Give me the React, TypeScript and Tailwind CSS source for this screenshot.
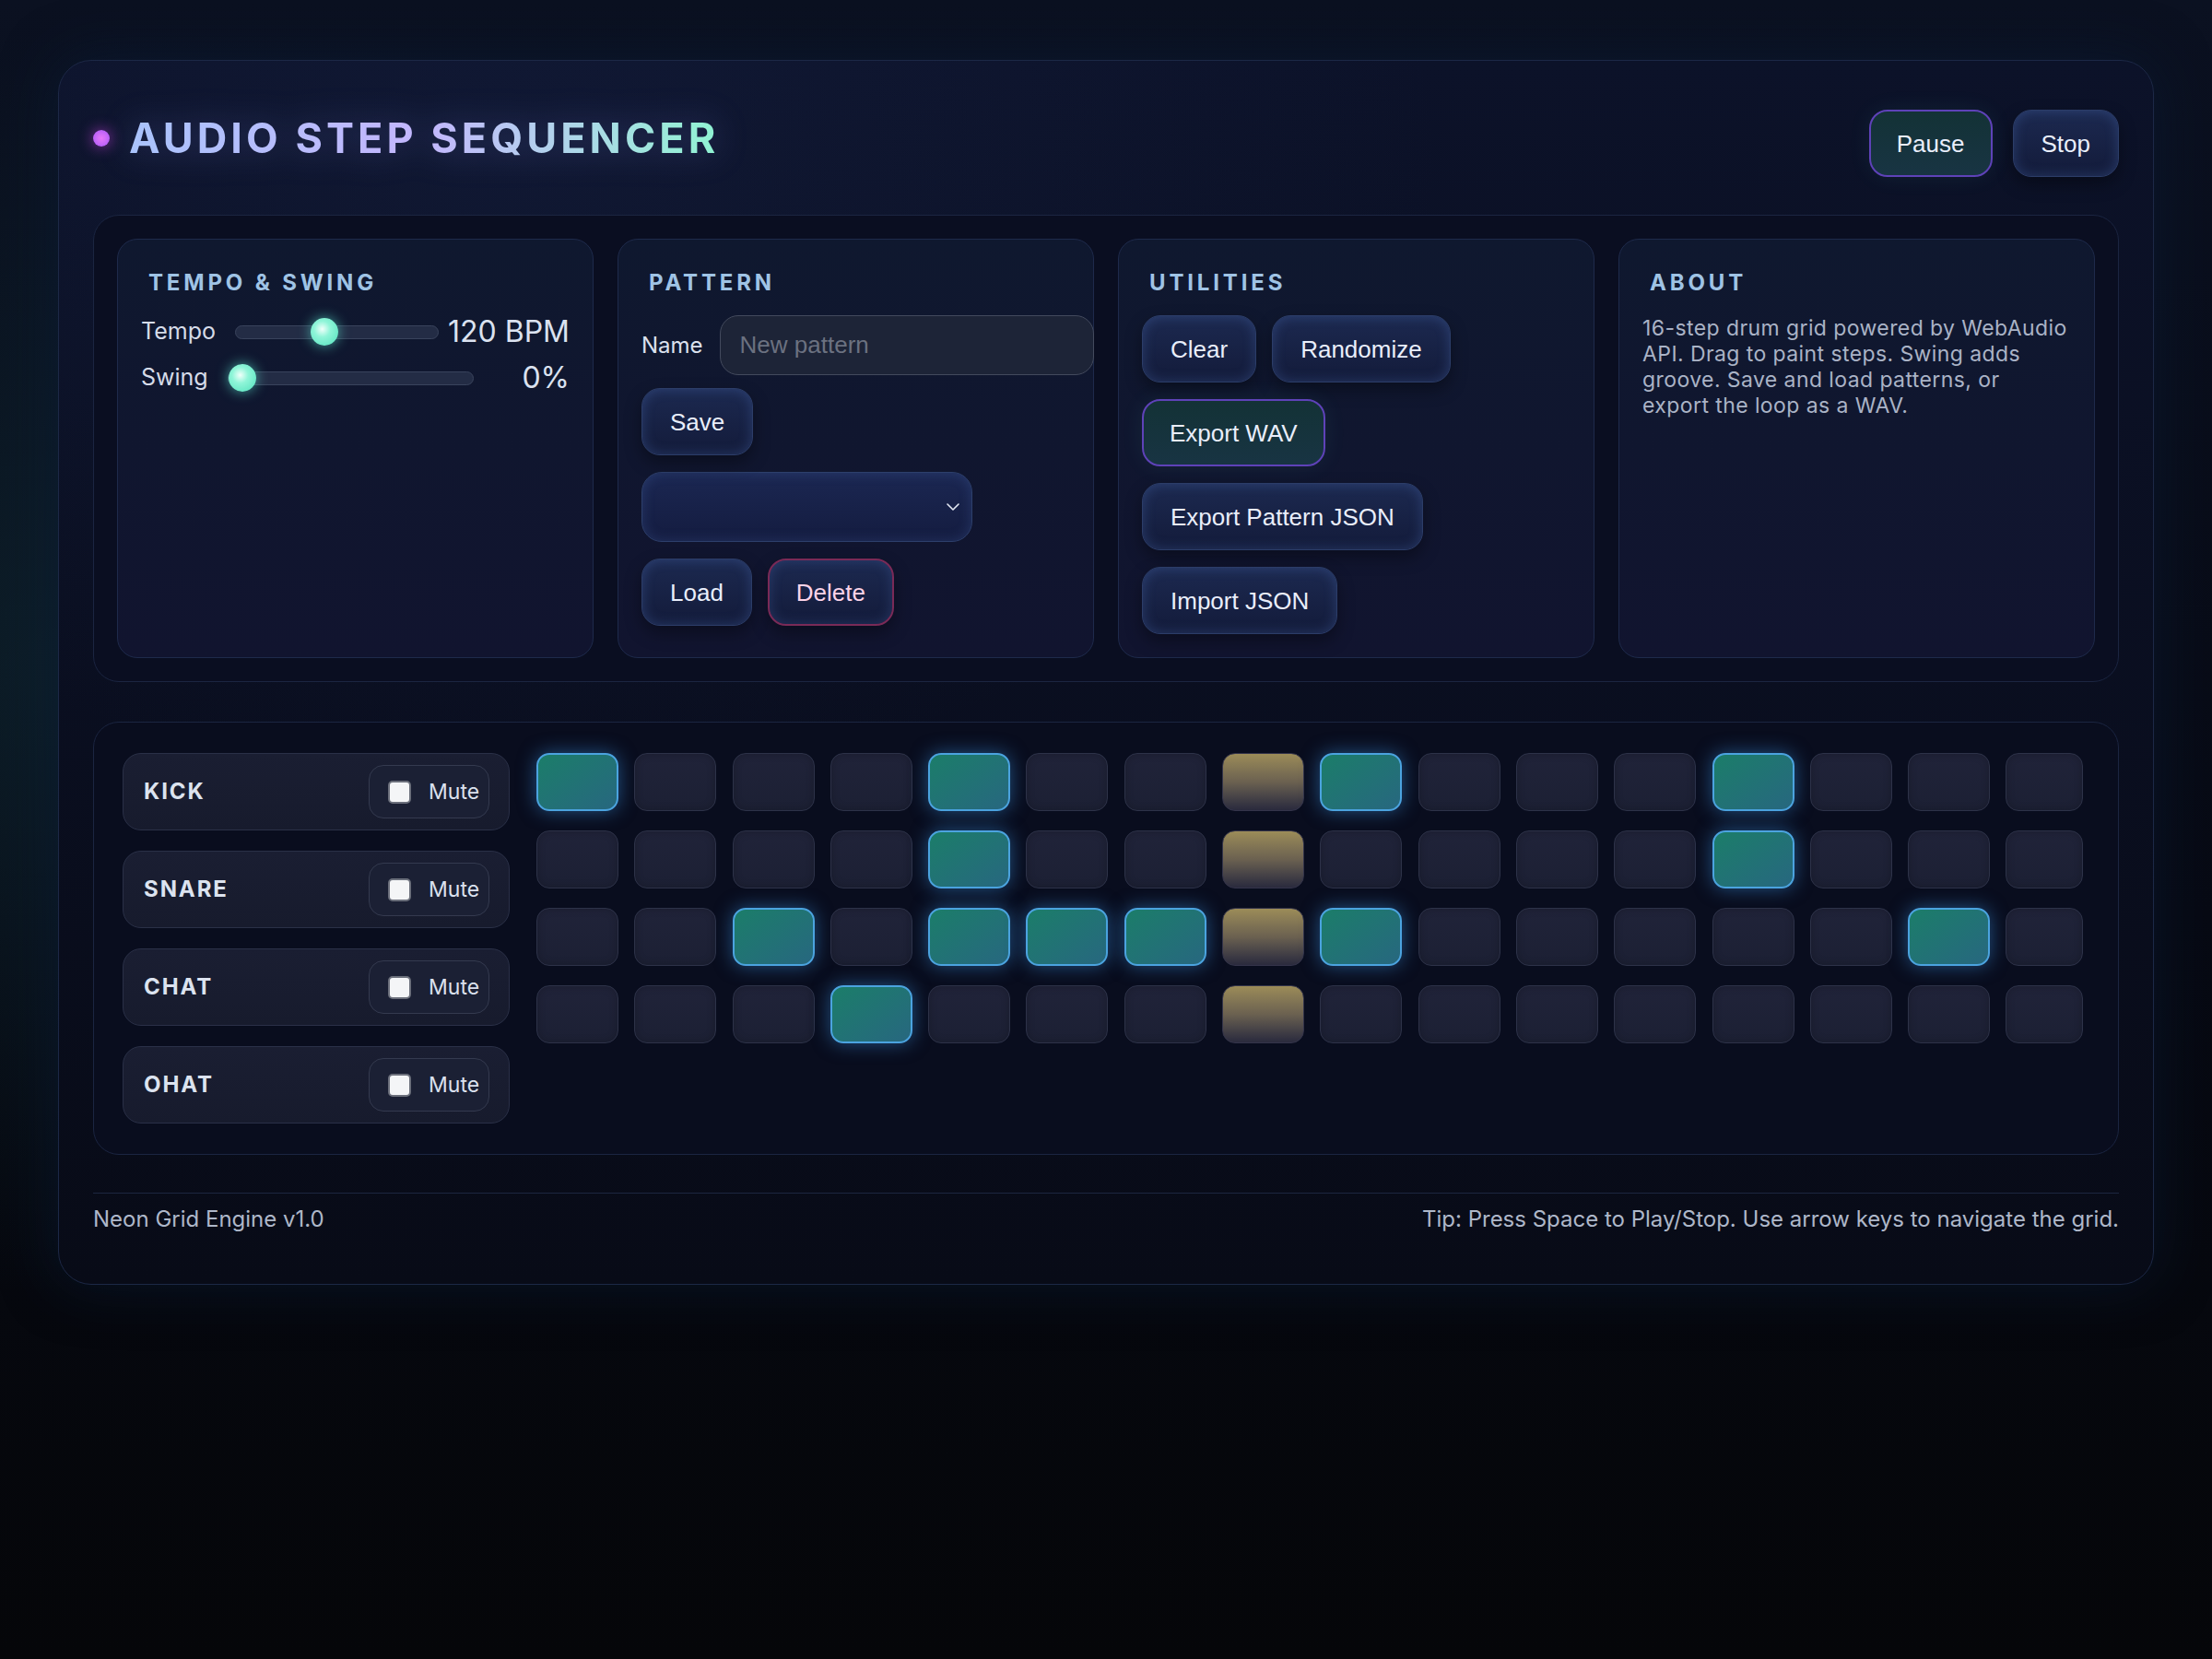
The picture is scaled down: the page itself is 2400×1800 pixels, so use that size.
import type { FC, ReactNode } from 'react'

const tracks = ['KICK', 'SNARE', 'CHAT', 'OHAT']
const steps: number[][] = [
  [0, 4, 8, 12],
  [4, 12],
  [2, 4, 5, 6, 8, 14],
  [3],
]
const playhead = 7

type Variant = 'default' | 'accent' | 'danger'

const variantClass: Record<Variant, string> = {
  default:
    'border border-[#2c3d68] bg-linear-to-b from-[#1c2950] to-[#131b3a] text-[#e9eefb] px-[30px] shadow-[inset_0_0_14px_rgba(90,130,210,0.3),0_8px_18px_rgba(0,0,0,0.35)]',
  accent:
    'border-2 border-[#5e42b8] bg-linear-to-b from-[#133236] to-[#183443] text-[#e9eefb] px-[28px] shadow-[0_0_26px_rgba(94,234,212,0.07)]',
  danger:
    'border-2 border-[#7a2a57] bg-linear-to-b from-[#1c2950] to-[#131b3a] text-[#fbd3e8] px-[29px] shadow-[inset_0_0_14px_rgba(90,130,210,0.25),0_8px_18px_rgba(0,0,0,0.35)]',
}

const Btn: FC<{ children: ReactNode; variant?: Variant }> = ({ children, variant = 'default' }) => (
  <button
    type="button"
    className={`h-[73px] shrink-0 rounded-[20px] font-['Liberation_Sans',Arial,sans-serif] text-[26px] leading-none ${variantClass[variant]}`}
  >
    {children}
  </button>
)

const Card: FC<{ title: string; children: ReactNode }> = ({ title, children }) => (
  <div className="rounded-[22px] border border-[#1e2a4b] bg-linear-to-b from-[#0f182f] to-[#11142f] px-[25px] pt-[32px] pb-[25px]">
    <h2 className="mb-[20px] pl-[8px] text-[24px] leading-[30px] font-bold tracking-[0.16em] text-[#9fc3e5]">
      {title}
    </h2>
    {children}
  </div>
)

const Slider: FC<{ pct: number }> = ({ pct }) => (
  <div className="relative h-[15px] flex-1 rounded-full border border-[#39435c] bg-[#232c45]">
    <span
      className="absolute top-1/2 h-[30px] w-[30px] -translate-x-1/2 -translate-y-1/2 rounded-full bg-[radial-gradient(circle_at_42%_40%,#f0fffa_0%,#8ff5d8_35%,#4fe0bb_100%)] shadow-[0_0_14px_rgba(94,234,212,0.65)]"
      style={{ left: `calc(15px + (100% - 30px) * ${pct})` }}
    />
  </div>
)

const Row: FC<{ label: string; value: string; pct: number }> = ({ label, value, pct }) => (
  <div className="flex h-[36px] items-center">
    <span className="mr-[21px] text-[25px] text-[#d5dbe8]">{label}</span>
    <Slider pct={pct} />
    <span className="ml-[10px] min-w-[94px] text-right text-[32px] leading-none text-[#dbe2f0]">{value}</span>
  </div>
)

const Cell: FC<{ on: boolean; head: boolean }> = ({ on, head }) => {
  if (head)
    return (
      <div className="h-[63px] rounded-[14px] border border-[#34344a] bg-linear-to-b from-[#9c8c58] via-[#6b6150] to-[#2a2a3d]" />
    )
  if (on)
    return (
      <div className="h-[63px] rounded-[14px] border-2 border-[#4ba3df] bg-linear-to-br from-[#1b7d69] to-[#27677f] shadow-[0_0_20px_rgba(59,150,230,0.5)]" />
    )
  return (
    <div className="h-[63px] rounded-[14px] border-[1.5px] border-[#2d3248] bg-linear-to-b from-[#202339] to-[#1c2034] shadow-[inset_0_0_10px_rgba(0,0,0,0.2)]" />
  )
}

export default function App() {
  return (
    <div className="min-h-[1800px] bg-[radial-gradient(ellipse_at_6%_40%,rgba(18,48,58,0.5)_0%,transparent_45%),linear-gradient(to_bottom,#0b1121_0%,#070a14_55%,#050609_100%)] px-[63px] pt-[65px] font-[Inter,sans-serif]">
      <div className="rounded-[36px] border border-[#1c2846] bg-[radial-gradient(ellipse_at_22%_8%,rgba(40,58,110,0.16)_0%,transparent_40%),linear-gradient(to_bottom,#0c1229,#080b17)] px-[37px] pt-[37px] pb-[38px] shadow-[0_0_60px_rgba(10,30,60,0.5)]">
        {/* header */}
        <header className="mb-[25px] flex h-[105px] items-center justify-between">
          <div className="mb-[12px] flex items-center gap-[21px]">
            <span className="h-[18px] w-[18px] rounded-full bg-radial from-[#e879f9] to-[#a855f7] shadow-[0_0_16px_rgba(217,70,239,0.7)]" />
            <h1 className="bg-linear-to-r from-[#a9c3fb] via-[#c3b6fd] to-[#8ff3d2] bg-clip-text text-[45px] leading-none font-bold tracking-[0.09em] text-transparent drop-shadow-[0_0_18px_rgba(129,140,248,0.3)]">
              AUDIO STEP SEQUENCER
            </h1>
          </div>
          <div className="flex gap-[22px]">
            <Btn variant="accent">Pause</Btn>
            <Btn>Stop</Btn>
          </div>
        </header>

        {/* controls */}
        <section className="grid grid-cols-4 gap-[26px] rounded-[28px] border border-[#1b2541] bg-[#0a0e21] p-[25px]">
          <Card title="TEMPO & SWING">
            <div className="flex flex-col gap-[14px]">
              <Row label="Tempo" value="120 BPM" pct={0.43} />
              <Row label="Swing" value="0%" pct={0} />
            </div>
          </Card>

          <Card title="PATTERN">
            <div className="flex items-center gap-[18px]">
              <span className="text-[24px] text-[#dbe1ee]">Name</span>
              <input
                placeholder="New pattern"
                className="h-[65px] w-[406px] shrink-0 rounded-[20px] border border-[#434a5d] bg-[#1d2437] px-[21px] font-['Liberation_Sans',Arial,sans-serif] text-[26px] text-[#e5e7eb] outline-none placeholder:text-[#6b7180]"
              />
            </div>
            <div className="mt-[14px]">
              <Btn>Save</Btn>
            </div>
            <div className="mt-[18px] flex h-[76px] w-[359px] items-center justify-end rounded-[22px] border border-[#2d3f6b] bg-linear-to-b from-[#1b2752] to-[#141c40] pr-[12px] shadow-[inset_0_0_14px_rgba(90,130,210,0.22)]">
              <svg width="16" height="10" viewBox="0 0 16 10" fill="none">
                <path d="M2 2l6 6 6-6" stroke="#e5eaf5" strokeWidth="1.6" strokeLinecap="round" strokeLinejoin="round" />
              </svg>
            </div>
            <div className="mt-[18px] flex gap-[17px]">
              <Btn>Load</Btn>
              <Btn variant="danger">Delete</Btn>
            </div>
          </Card>

          <Card title="UTILITIES">
            <div className="flex flex-wrap gap-x-[17px] gap-y-[18px]">
              <Btn>Clear</Btn>
              <Btn>Randomize</Btn>
              <Btn variant="accent">Export WAV</Btn>
              <Btn>Export Pattern JSON</Btn>
              <Btn>Import JSON</Btn>
            </div>
          </Card>

          <Card title="ABOUT">
            <p className="text-[23px] leading-[28px] tracking-[0.018em] text-[#aab3c6]">
              16-step drum grid powered by WebAudio API. Drag to paint steps. Swing adds groove. Save and load patterns, or export the loop as a WAV.
            </p>
          </Card>
        </section>

        {/* sequencer */}
        <section className="mt-[43px] flex rounded-[28px] border border-[#1b2541] bg-[#090d1e] px-[31px] py-[33px]">
          <div className="flex w-[420px] shrink-0 flex-col gap-[22px]">
            {tracks.map(t => (
              <div
                key={t}
                className="flex h-[84px] items-center justify-between rounded-[20px] border border-[#2a3047] bg-linear-to-b from-[#1a1e32] to-[#171b2d] pr-[21px] pl-[22px]"
              >
                <span className="text-[24px] font-bold tracking-[0.08em] text-[#dce3ef]">{t}</span>
                <label className="flex h-[58px] w-[131px] items-center gap-[19px] rounded-[16px] border border-[#343a4f] bg-[#1b2034] pl-[20px]">
                  <span className="h-[25px] w-[25px] rounded-[5px] border-2 border-[#6b6f7b] bg-[#f4f5f7]" />
                  <span className="text-[23px] text-[#dbe1ee]">Mute</span>
                </label>
              </div>
            ))}
          </div>

          <div className="ml-[29px] grid h-fit grid-cols-[repeat(15,89px)_84px] gap-x-[17.3px] gap-y-[21px]">
            {steps.map((row, r) =>
              Array.from({ length: 16 }, (_, c) => (
                <Cell key={`${r}-${c}`} on={row.includes(c)} head={c === playhead} />
              )),
            )}
          </div>
        </section>

        {/* footer */}
        <footer className="mt-[41px] flex items-center justify-between border-t border-[#1c2640] pt-[13px] pb-[17px] text-[24px] leading-[30px] text-[#aeb7c9]">
          <span>Neon Grid Engine v1.0</span>
          <span>Tip: Press Space to Play/Stop. Use arrow keys to navigate the grid.</span>
        </footer>
      </div>
    </div>
  )
}
